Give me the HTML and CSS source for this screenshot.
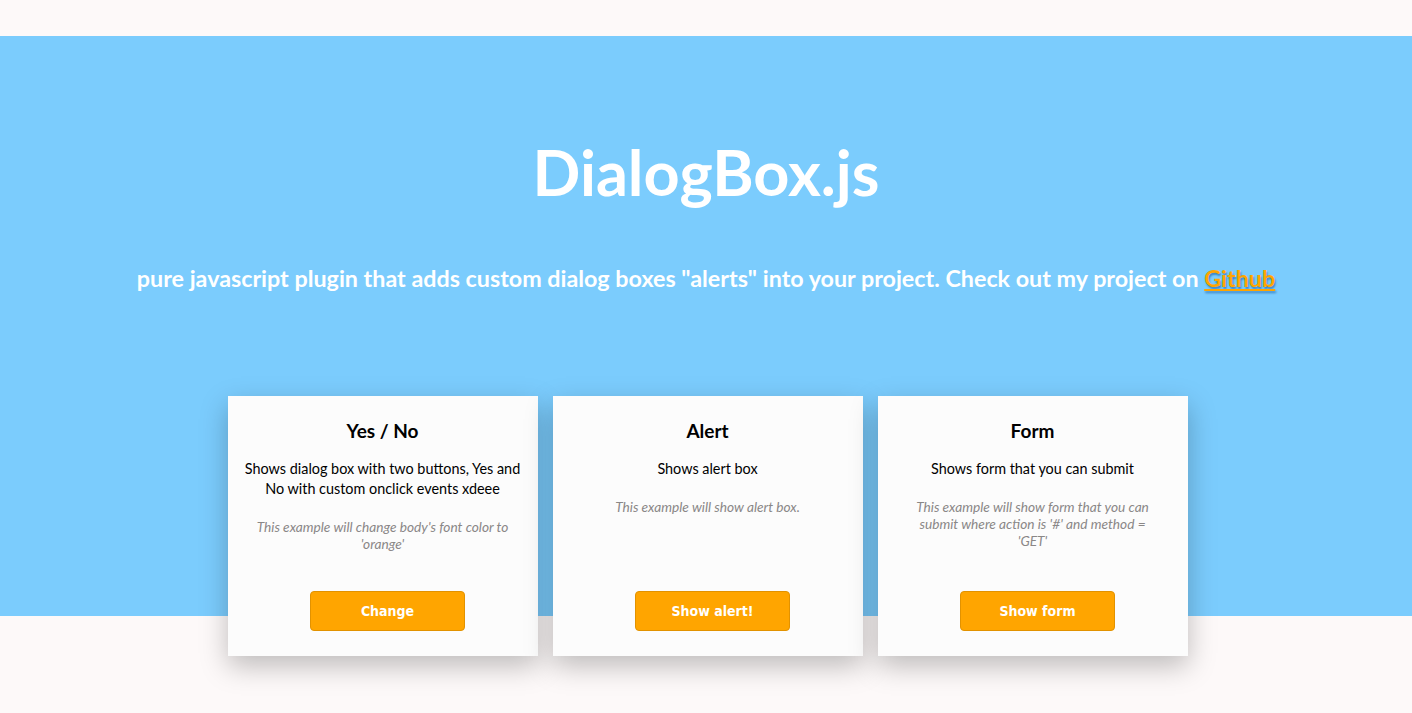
FILE: index.html
```html
<!DOCTYPE html>
<html lang="en">
<head>
    <meta charset="UTF-8">
    <meta name="viewport" content="width=device-width, initial-scale=1.0">
    <title>DialogBox.js</title>
    <link rel="stylesheet" href="styles.css">
</head>
<body>
    <div class="header">
        <h1>DialogBox.js</h1>
        <p class="subtitle">pure javascript plugin that adds custom dialog boxes "alerts" into your project. Check out my project on <a href="#">Github</a></p>

        <div class="examples">
            <div class="card">
                <h3>Yes / No</h3>
                <p class="desc">Shows dialog box with two buttons, Yes and No with custom onclick events xdeee</p>
                <p class="note">This example will change body's font color to 'orange'</p>
                <button class="btn">Change</button>
            </div>
            <div class="card">
                <h3>Alert</h3>
                <p class="desc">Shows alert box</p>
                <p class="note">This example will show alert box.</p>
                <button class="btn">Show alert!</button>
            </div>
            <div class="card">
                <h3>Form</h3>
                <p class="desc">Shows form that you can submit</p>
                <p class="note">This example will show form that you can submit where action is '#' and method = 'GET'</p>
                <button class="btn">Show form</button>
            </div>
        </div>
    </div>
</body>
</html>
```

FILE: styles.css
```css
body {
    margin: 0;
    padding-top: 36px;
    background-color: #fdf9f9;
    font-family: Lato, "Open Sans", sans-serif;
    color: #000;
}

/* blue band is 580px tall, cards hang 40px below it */
.header {
    background: linear-gradient(#7bccfd 0, #7bccfd 580px, transparent 580px);
    padding: 100px 0 80px;
    text-align: center;
    color: #fff;
}

.header h1 {
    margin: 0;
    font-size: 63px;
    line-height: 72px;
    font-weight: 700;
}

.subtitle {
    margin: 55px 0 0;
    font-size: 23.3px;
    font-weight: 700;
    line-height: 30px;
}

.subtitle a {
    color: #ffa500;
    text-decoration: underline;
    text-shadow: 1px 2px 2px rgba(0, 70, 150, 0.55);
}

/* Example cards */
.examples {
    display: flex;
    justify-content: center;
    gap: 15px;
    padding-left: 3px;
    margin-top: 103px;
}

.card {
    width: 310px;
    height: 260px;
    box-sizing: border-box;
    padding: 22px 8px 25px;
    background-color: #fcfcfc;
    color: #000;
    display: flex;
    flex-direction: column;
    align-items: center;
    box-shadow: 0 10px 26px rgba(0, 0, 0, 0.25);
}

.card h3 {
    margin: 0;
    font-size: 19px;
    line-height: 26px;
    font-weight: 700;
}

.desc {
    margin: 15px 0 0;
    font-size: 14.4px;
    line-height: 20px;
}

.note {
    max-width: 256px;
    margin: 19px 0 0;
    font-size: 13.7px;
    line-height: 17px;
    font-style: italic;
    color: #8a8787;
}

.btn {
    margin-top: auto;
    margin-left: 10px;
    width: 155px;
    height: 40px;
    background-color: #ffa500;
    border: 1px solid #e29200;
    border-radius: 4px;
    color: #fff;
    font-family: "DejaVu Sans", Verdana, sans-serif;
    font-stretch: condensed;
    font-size: 14px;
    font-weight: 700;
    cursor: pointer;
}
```
